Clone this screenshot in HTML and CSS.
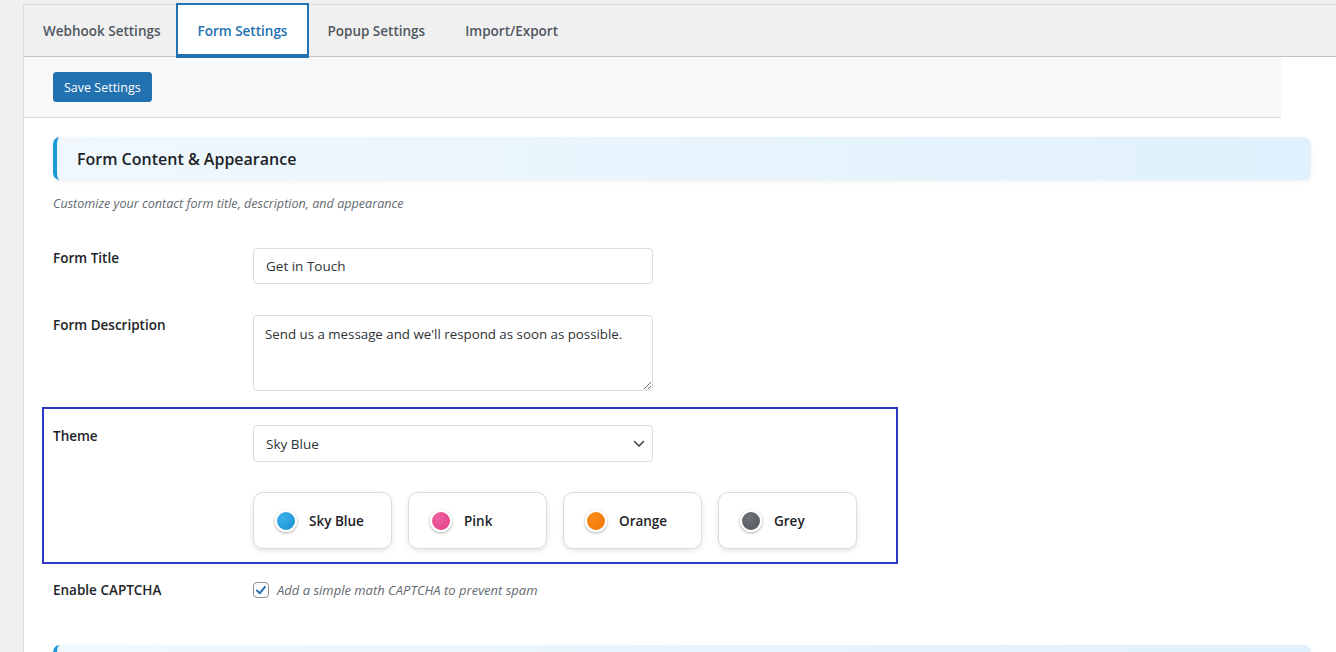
FILE: index.html
```html
<!DOCTYPE html>
<html lang="en">
<head>
<meta charset="utf-8">
<title>Form Settings</title>
<link rel="stylesheet" href="styles.css">
</head>
<body>
<div class="page">
  <div class="panel">
    <nav class="tabs">
      <a class="tab">Webhook Settings</a>
      <a class="tab active">Form Settings</a>
      <a class="tab">Popup Settings</a>
      <a class="tab">Import/Export</a>
    </nav>
    <div class="toolbar">
      <button class="btn-primary">Save Settings</button>
    </div>
    <div class="content">
      <h2 class="section-head">Form Content &amp; Appearance</h2>
      <p class="section-desc">Customize your contact form title, description, and appearance</p>

      <div class="form">
        <div class="row">
          <label class="row-label">Form Title</label>
          <div class="row-field"><input class="text-input" type="text" value="Get in Touch"></div>
        </div>
        <div class="row">
          <label class="row-label">Form Description</label>
          <div class="row-field"><textarea class="text-area">Send us a message and we'll respond as soon as possible.</textarea></div>
        </div>
        <div class="row theme-row">
          <label class="row-label">Theme</label>
          <div class="row-field">
            <div class="select-wrap">
              <select class="select"><option>Sky Blue</option><option>Pink</option><option>Orange</option><option>Grey</option></select>
              <svg class="chevron" width="12" height="8" viewBox="0 0 12 8"><path d="M1.5 1.5 L6 6 L10.5 1.5" fill="none" stroke="#3c434a" stroke-width="1.6" stroke-linecap="round" stroke-linejoin="round"/></svg>
            </div>
            <div class="swatches">
              <div class="swatch"><span class="dot dot-blue"></span><span class="swatch-name">Sky Blue</span></div>
              <div class="swatch"><span class="dot dot-pink"></span><span class="swatch-name">Pink</span></div>
              <div class="swatch"><span class="dot dot-orange"></span><span class="swatch-name">Orange</span></div>
              <div class="swatch"><span class="dot dot-grey"></span><span class="swatch-name">Grey</span></div>
            </div>
          </div>
        </div>
        <div class="row captcha-row">
          <label class="row-label">Enable CAPTCHA</label>
          <div class="row-field check-field">
            <span class="checkbox"><svg width="12" height="12" viewBox="0 0 12 12"><path d="M2 6.5 L4.8 9.2 L10 2.8" fill="none" stroke="#2271b1" stroke-width="2" stroke-linecap="round" stroke-linejoin="round"/></svg></span>
            <span class="check-text">Add a simple math CAPTCHA to prevent spam</span>
          </div>
        </div>
      </div>

      <div class="section-head next-head"></div>
    </div>
  </div>
</div>
</body>
</html>
```

FILE: styles.css
```css
* { box-sizing: border-box; }
html, body { margin: 0; padding: 0; }
body {
  background: #f0f0f1;
  font-family: "Open Sans", "Noto Sans", "Liberation Sans", sans-serif;
  color: #1d2327;
  overflow: hidden;
}
.page {
  padding: 4px 0 0 23px;
  height: 652px;
}
.panel {
  background: #fff;
  border-left: 1px solid #dcdcde;
  height: 100%;
}
.tabs {
  display: flex;
  height: 53px;
  background: #f0f0f1;
  border-top: 1px solid #dcdcde;
  border-bottom: 1px solid #c3c4c7;
}
.tab {
  display: flex;
  align-items: center;
  padding: 0 19px 0 19px;
  font-size: 13.5px;
  font-weight: 600;
  color: #50575e;
  cursor: pointer;
  white-space: nowrap;
}
.tab:first-child { padding-right: 17px; }
.tab:nth-child(3) { padding: 0 20px 0 18px; }
.tab:nth-child(4) { padding-left: 20px; }
.tab.active {
  background: #fff;
  color: #2271b1;
  border: 2px solid #2271b1;
  border-bottom-width: 4px;
  margin: -2px 0 -2px -2px;
  padding: 2px 20px 0;
}
.toolbar {
  background: #f9f9f9;
  border-bottom: 1px solid #dcdcde;
  height: 61px;
  margin-right: 55px;
  padding: 15px 29px;
}
.btn-primary {
  background: #2271b1;
  color: #fff;
  border: 1px solid #2271b1;
  border-radius: 3px;
  height: 30px;
  padding: 0 10px;
  font-family: inherit;
  font-size: 12.5px;
  cursor: pointer;
}
.content {
  padding: 19px 25px 0 29px;
}
.section-head {
  margin: 0;
  height: 43px;
  display: flex;
  align-items: center;
  padding-left: 20px;
  background: linear-gradient(90deg, #f0f8fe 0%, #e0f1fd 100%);
  border-left: 4px solid #1a9ad6;
  border-radius: 7px;
  box-shadow: 0 2px 5px rgba(0, 0, 0, 0.05);
  font-size: 16px;
  font-weight: 600;
  color: #1d2327;
}
.section-desc {
  margin: 16px 0 0;
  font-size: 12.6px;
  font-style: italic;
  color: #646970;
  line-height: 16px;
}
.form {
  display: flex;
  flex-direction: column;
  margin-top: 36px;
}
.row {
  display: flex;
  align-items: flex-start;
}
.row + .row { margin-top: 31px; }
.row-label {
  width: 200px;
  flex: none;
  font-size: 13.5px;
  font-weight: 600;
  line-height: 20px;
  color: #1d2327;
}
.row-field { flex: none; }
.text-input, .text-area, .select {
  width: 400px;
  border: 1px solid #dcdcde;
  border-radius: 4px;
  background: #fff;
  font-family: inherit;
  font-size: 13.5px;
  color: #2c3338;
  outline: none;
}
.text-input {
  height: 36px;
  padding: 0 12px;
}
.text-area {
  display: block;
  height: 76px;
  padding: 7px 11px;
  line-height: 22px;
  font-size: 13.3px;
  resize: vertical;
}
.theme-row {
  border: 2px solid #2f36c2;
  width: 856px;
  margin-left: -11px;
  padding: 16px 9px 13px;
}
.row + .theme-row { margin-top: 16px; }
.theme-row .row-label { margin-top: 1px; }
.select-wrap {
  position: relative;
  width: 400px;
}
.select {
  display: block;
  height: 37px;
  padding: 0 12px;
  -webkit-appearance: none;
  appearance: none;
}
.chevron {
  position: absolute;
  right: 8px;
  top: 15px;
  pointer-events: none;
}
.swatches {
  display: flex;
  gap: 16px;
  margin-top: 30px;
}
.swatch {
  width: 139px;
  height: 57px;
  display: flex;
  align-items: center;
  padding-left: 21px;
  border: 1px solid #dcdcde;
  border-radius: 10px;
  background: #fff;
  box-shadow: 0 2px 5px rgba(0, 0, 0, 0.1);
}
.dot {
  width: 22px;
  height: 22px;
  border-radius: 50%;
  border: 2px solid #fff;
  box-shadow: 0 1px 3px rgba(0, 0, 0, 0.35);
  flex: none;
}
.dot-blue { background: radial-gradient(circle at 35% 30%, #3cb0ea, #1490d0); }
.dot-pink { background: radial-gradient(circle at 35% 30%, #f060a0, #e03e86); }
.dot-orange { background: radial-gradient(circle at 35% 30%, #fb8c1c, #f07400); }
.dot-grey { background: radial-gradient(circle at 35% 30%, #6e737a, #50555c); }
.swatch-name {
  margin-left: 12px;
  font-size: 13.5px;
  font-weight: 600;
  color: #1d2327;
}
.row + .captcha-row { margin-top: 16px; }
.check-field {
  display: flex;
  align-items: center;
  height: 20px;
}
.checkbox {
  width: 16px;
  height: 16px;
  border: 1px solid #8c8f94;
  border-radius: 4px;
  background: #fff;
  display: flex;
  align-items: center;
  justify-content: center;
}
.check-text {
  margin-left: 8px;
  font-size: 13px;
  font-style: italic;
  color: #646970;
}
.next-head {
  margin-top: 45px;
}
```
